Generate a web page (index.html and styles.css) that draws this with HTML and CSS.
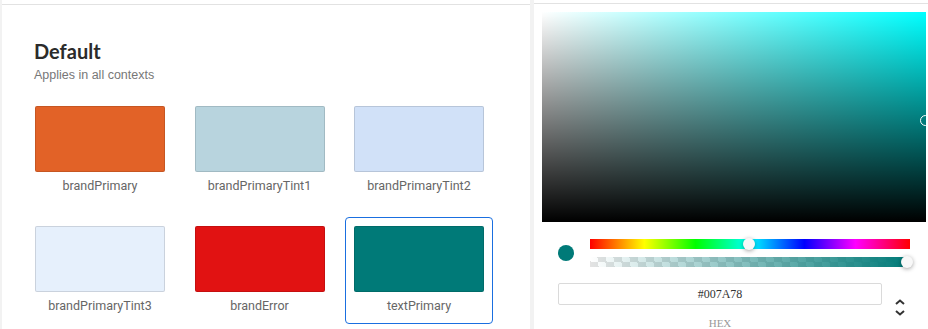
FILE: index.html
```html
<!DOCTYPE html>
<html lang="en">
<head>
    <meta charset="UTF-8">
    <title>Theme colours</title>
    <link rel="stylesheet" href="styles.css">
</head>
<body>
    <div class="panel left">
        <div class="topbar"></div>
        <div class="content">
            <h2>Default</h2>
            <p class="sub">Applies in all contexts</p>
            <div class="grid">
                <div class="card">
                    <div class="swatch primary"></div>
                    <span>brandPrimary</span>
                </div>
                <div class="card">
                    <div class="swatch tint1"></div>
                    <span>brandPrimaryTint1</span>
                </div>
                <div class="card">
                    <div class="swatch tint2"></div>
                    <span>brandPrimaryTint2</span>
                </div>
                <div class="card">
                    <div class="swatch tint3"></div>
                    <span>brandPrimaryTint3</span>
                </div>
                <div class="card">
                    <div class="swatch error"></div>
                    <span>brandError</span>
                </div>
                <div class="card selected">
                    <div class="swatch text"></div>
                    <span>textPrimary</span>
                </div>
            </div>
        </div>
    </div>

    <div class="panel right">
        <div class="topbar small"></div>
        <div class="picker">
            <div class="saturation">
                <div class="cursor"></div>
            </div>
            <div class="controls">
                <div class="preview"></div>
                <div class="sliders">
                    <div class="hue">
                        <div class="thumb hue-thumb"></div>
                    </div>
                    <div class="alpha">
                        <div class="alpha-fill"></div>
                        <div class="thumb alpha-thumb"></div>
                    </div>
                </div>
            </div>
            <div class="fields">
                <div class="field">
                    <input type="text" value="#007A78">
                    <label>HEX</label>
                </div>
                <div class="toggle">
                    <svg width="12" height="20" viewBox="0 0 12 20">
                        <path d="M2 6 L6 2.5 L10 6" fill="none" stroke="#333" stroke-width="2"/>
                        <path d="M2 13 L6 16.5 L10 13" fill="none" stroke="#333" stroke-width="2"/>
                    </svg>
                </div>
            </div>
        </div>
    </div>
</body>
</html>
```

FILE: styles.css
```css
body {
    margin: 0;
    padding: 0 0 0 2px;
    background: #f2f2f2;
    display: flex;
    gap: 4px;
    height: 329px;
    overflow: hidden;
    font-family: Roboto, "Liberation Sans", Arial, sans-serif;
}

.panel {
    background: #fff;
    height: 329px;
}

.left {
    width: 528px;
}

.right {
    width: 394px;
}

.topbar {
    height: 4px;
    border-bottom: 1px solid #e2e2e2;
}

.topbar.small {
    height: 3px;
}

.content {
    padding: 34px 0 0 24px;
}

h2 {
    font-family: Lato, "Open Sans", sans-serif;
    font-weight: 700;
    font-size: 20px;
    line-height: 24px;
    color: #2b2b2b;
    margin: 0 0 0 8px;
}

.sub {
    font-family: "Liberation Sans", Arial, sans-serif;
    font-size: 12.5px;
    line-height: 16px;
    color: #777;
    margin: 4px 0 14px 8px;
}

.grid {
    display: grid;
    grid-template-columns: repeat(3, 148px);
    column-gap: 11.5px;
    row-gap: 13px;
}

.card {
    border: 1px solid transparent;
    border-radius: 4px;
    padding: 8px 8px 10px;
    display: flex;
    flex-direction: column;
    align-items: center;
}

.card.selected {
    border-color: #1a6fe0;
}

.swatch {
    width: 130px;
    height: 66px;
    box-sizing: border-box;
    border-radius: 2px;
    border: 1px solid rgba(0, 0, 0, 0.12);
}

.card span {
    margin-top: 7px;
    font-size: 12.5px;
    line-height: 14px;
    color: #666;
}

.primary { background: #e26227; }
.tint1 { background: #b8d4de; }
.tint2 { background: #d1e1f8; }
.tint3 { background: #e6f0fc; }
.error { background: #e11212; }
.text { background: #007a78; }

.picker {
    padding: 8px 0 0 8px;
}

.saturation {
    position: relative;
    width: 384px;
    height: 210px;
    background: linear-gradient(to top, #000, rgba(0, 0, 0, 0)),
        linear-gradient(to right, #fff, #00ffff);
}

.cursor {
    position: absolute;
    left: 378px;
    top: 103px;
    width: 9px;
    height: 9px;
    border: 1.5px solid #fff;
    border-radius: 50%;
}

.controls {
    display: flex;
    align-items: center;
    margin-top: 17px;
    padding-left: 16px;
}

.preview {
    width: 16px;
    height: 16px;
    border-radius: 50%;
    background: #007a78;
}

.sliders {
    margin-left: 16px;
    width: 320px;
}

.hue, .alpha {
    position: relative;
    height: 10px;
}

.hue {
    background: linear-gradient(to right, #f00 0%, #ff0 17%, #0f0 33%, #0ff 50%, #00f 67%, #f0f 83%, #f00 100%);
}

.alpha {
    margin-top: 8px;
    background-color: #fff;
    background-image:
        linear-gradient(45deg, #e3e3e3 25%, transparent 25%, transparent 75%, #e3e3e3 75%),
        linear-gradient(45deg, #e3e3e3 25%, transparent 25%, transparent 75%, #e3e3e3 75%);
    background-size: 16px 10px;
    background-position: 0 0, 8px 5px;
}

.alpha-fill {
    height: 100%;
    background: linear-gradient(to right, rgba(0, 122, 120, 0), #007a78);
}

.thumb {
    position: absolute;
    top: -1px;
    width: 12px;
    height: 12px;
    border-radius: 50%;
    background: #f8f8f8;
    box-shadow: 0 1px 4px rgba(0, 0, 0, 0.37);
}

.hue-thumb {
    left: 153px;
}

.alpha-thumb {
    left: 311px;
}

.fields {
    display: flex;
    margin-top: 16px;
    padding-left: 16px;
}

.field {
    width: 324px;
    display: flex;
    flex-direction: column;
    align-items: center;
}

.field input {
    width: 100%;
    height: 22px;
    box-sizing: border-box;
    border: 1px solid #dadada;
    border-radius: 2px;
    text-align: center;
    font-family: "Liberation Serif", serif;
    font-size: 12px;
    color: #333;
    padding: 0;
    outline: none;
}

.field label {
    margin-top: 12px;
    font-family: "Liberation Serif", serif;
    font-size: 11px;
    color: #999;
}

.toggle {
    margin: 15px 0 0 12px;
}
```
